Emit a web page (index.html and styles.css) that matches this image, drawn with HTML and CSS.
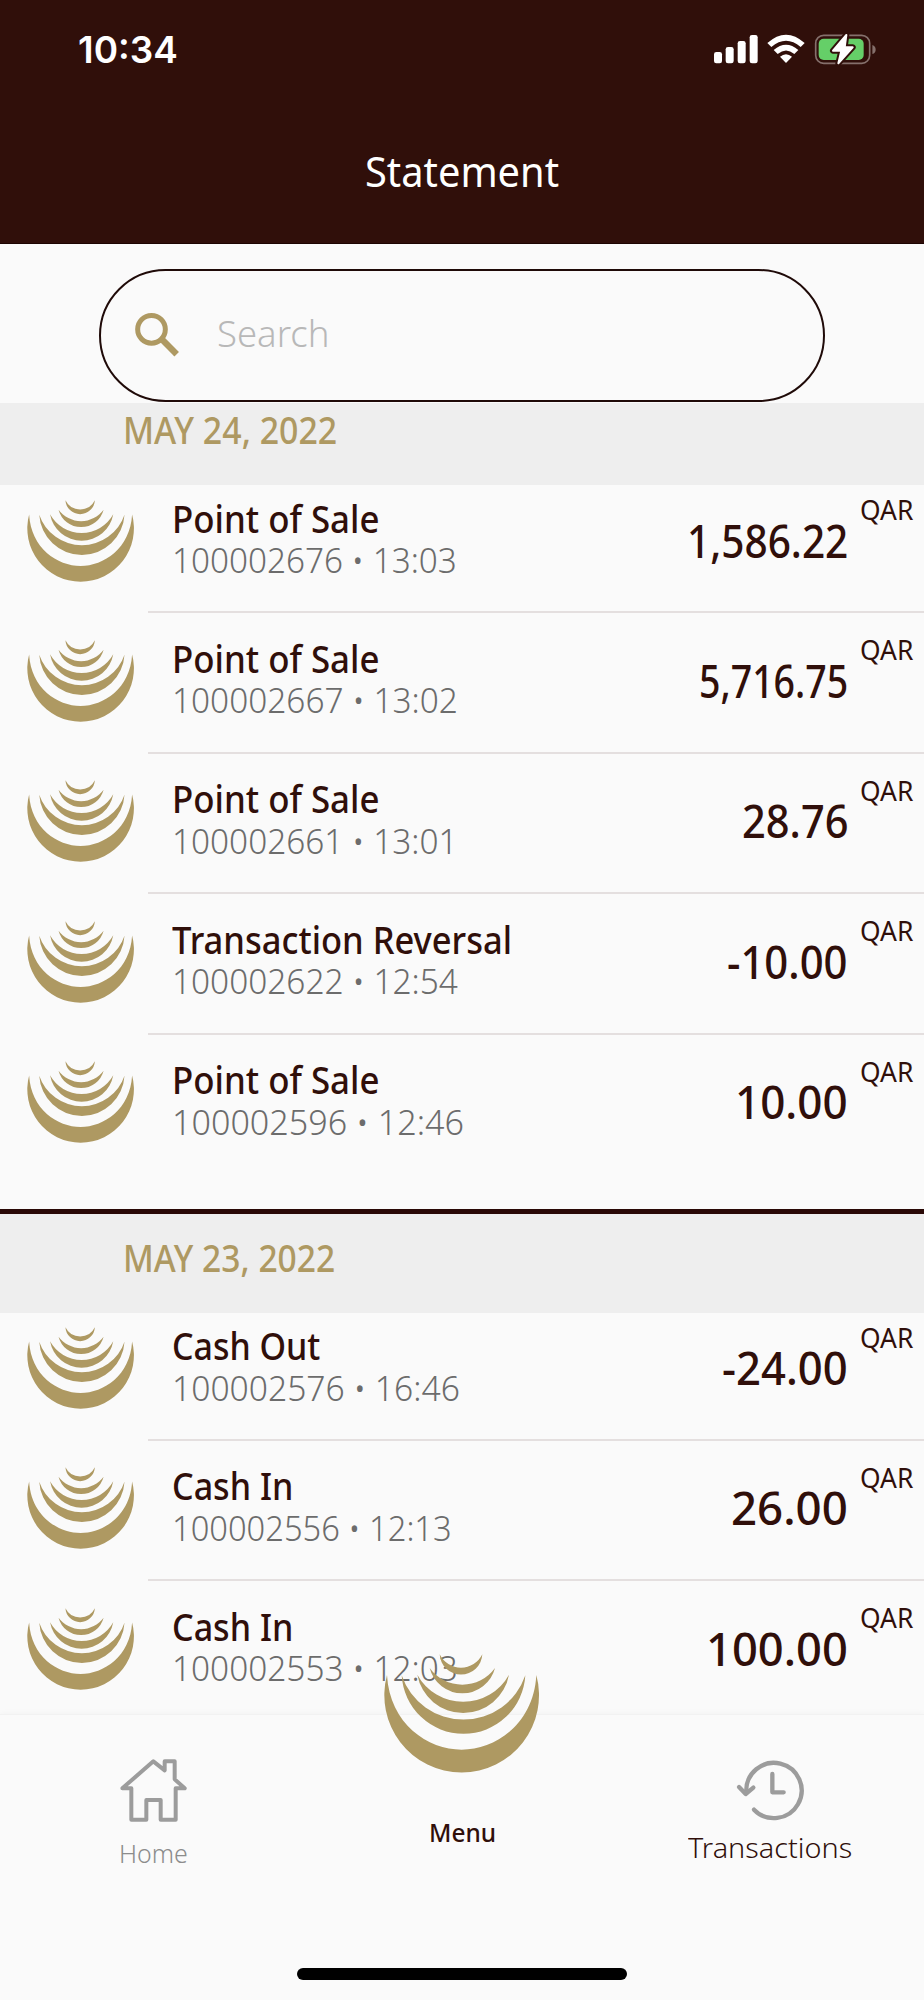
FILE: index.html
```html
<!DOCTYPE html>
<html lang="en">
<head>
<meta charset="utf-8">
<title>Statement</title>
<link rel="stylesheet" href="styles.css">
</head>
<body>
<svg class="defs" aria-hidden="true">
  <symbol id="crescents" viewBox="133 100 465 359">
    <path d="M300 101A64.1 64.1 0 0 0 428 101A71.2 71.2 0 0 1 300 101Z"/>
    <path d="M270 142A101.2 101.2 0 0 0 466 142A121 121 0 0 1 270 142Z"/>
    <path d="M233 162A139.7 139.7 0 0 0 508 162A157 157 0 0 1 233 162Z"/>
    <path d="M186 164A185.8 185.8 0 0 0 557 164A196 196 0 0 1 186 164Z"/>
    <path d="M142 163A232 232 0 1 0 590 163C582 310 467 387 366 387C265 387 150 310 142 163Z"/>
  </symbol>
</svg>
<div class="screen">
  <header class="header">
    <div class="status">
      <span class="clock" data-fit="98">10:34</span>
      <svg class="status-icons" viewBox="750 97 500 102">
        <g fill="#fff">
          <rect x="756" y="157" width="24" height="34" rx="7"/>
          <rect x="791" y="142" width="24" height="49" rx="7"/>
          <rect x="827" y="124" width="24" height="67" rx="7"/>
          <rect x="863" y="106" width="24" height="85" rx="7"/>
          <path d="M916 130Q972 80 1028 130L1016 142Q972 104 928 142Z"/>
          <path d="M935 151Q972 119 1009 151L997 163Q972 142 947 163Z"/>
          <path d="M954 171Q972 156 990 171L972 190Z"/>
        </g>
        <rect x="1061" y="107" width="162" height="84" rx="24" fill="none" stroke="#85706c" stroke-width="5"/>
        <path d="M1231 136Q1241 140 1241 150Q1241 160 1231 163Z" fill="#85706c"/>
        <rect x="1070" y="117" width="135" height="64" rx="15" fill="#65cf68"/>
        <path d="M1153 106L1113 153H1138L1129 191L1172 143H1148Z" fill="#fff" stroke="#300f0a" stroke-width="18" stroke-linejoin="round"/>
        <path d="M1153 106L1113 153H1138L1129 191L1172 143H1148Z" fill="#fff" stroke="#fff" stroke-width="6" stroke-linejoin="round"/>
      </svg>
    </div>
    <h1 class="title"><span data-fit="192">Statement</span></h1>
  </header>

  <div class="search">
    <div class="search-box">
      <svg class="search-icon" viewBox="0 0 132 132" fill="none" stroke="#ae9962">
        <circle cx="49.500" cy="49" r="41.500" stroke-width="15"/>
        <path d="M82 80L125 124" stroke-width="19"/>
      </svg>
      <span class="placeholder" data-fit="109">Search</span>
    </div>
  </div>

  <main id="list"></main>

  <nav class="tabs">
    <div class="tab tab-home">
      <svg viewBox="119 117 206 194" fill="none" stroke="#9c9c9c" stroke-width="12" stroke-linejoin="round">
        <path d="M156 302V208H129L222 127L256 154V127H286V181L316 208H289V302H244V243H201V302Z"/>
      </svg>
      <span data-fit="66">Home</span>
    </div>
    <div class="tab tab-menu">
      <svg class="menu-logo"><use href="#crescents"/></svg>
      <span data-fit="64">Menu</span>
    </div>
    <div class="tab tab-transactions">
      <svg viewBox="228 122 206 184" fill="none" stroke="#9c9c9c" stroke-width="13" stroke-linecap="round" stroke-linejoin="round">
        <path d="M259 218A83 83 0 1 1 282 271"/>
        <path d="M237 203L257 224L280 205"/>
        <path d="M337 164V219H371"/>
      </svg>
      <span data-fit="163">Transactions</span>
    </div>
    <div class="indicator"></div>
  </nav>
</div>
<script src="app.js"></script>
</body>
</html>
```
FILE: styles.css
```css
* { box-sizing: border-box; }
body { margin: 0; background: #fafafa; font-family: "Noto Sans", "Open Sans", sans-serif; color: #300f0a; }
.defs { display: none; }
.screen { width: 924px; height: 2000px; overflow: hidden; display: flex; flex-direction: column; background: #fafafa; }
span { display: inline-block; white-space: pre; transform-origin: 0 50%; }
svg { display: block; flex: none; overflow: visible; }

.header { height: 243.5px; flex: none; background: #300f0a; color: #fff; border-bottom: 1.5px solid #1d0502; }
.status { display: flex; justify-content: space-between; padding: 25px 45px 0 77.5px; height: 112px; }
.clock { font: 600 37.5px/50px Inter, sans-serif; }
.status-icons { width: 166.7px; height: 34px; margin: 7.3px 0 0; }
.title { margin: 29px 0 0; font-size: 42px; font-weight: 400; line-height: 60px; text-align: center; }

.search { flex: none; height: 159px; padding: 25px 99px 0; }
.search-box { height: 133.5px; border: 2px solid #1f0a08; border-radius: 67px; display: flex; align-items: flex-start; background: #fafafa; }
.search-icon { width: 44px; height: 44px; margin: 42.5px 0 0 34px; }
.placeholder { margin: 38px 0 0 38px; font-size: 36px; font-weight: 300; line-height: 50px; color: #b8b8b8; }

#list { flex: none; height: 1311.5px; overflow: hidden; }
.date { height: 82.5px; padding: 1.5px 0 0 122.5px; background: #eee; color: #ae9962; font-size: 38px; font-weight: 500; line-height: 50px; }
.section + .section .date { height: 103.5px; border-top: 5px solid #2a0906; padding-top: 18px; }
.row { display: flex; height: 140.5px; padding: 22.7px 0 0 26.5px; position: relative; }
.row:nth-child(2) { height: 128px; padding-top: 10.7px; }
.section:first-child .row:last-child { height: 174.5px; }
.row:not(:last-child)::after { content: ""; position: absolute; left: 148px; right: 0; bottom: 0; height: 2px; background: #e4dfdf; }
.row-logo { width: 107px; height: 82.5px; margin-top: 4px; fill: #ae9962; }
.info { flex: 1; padding-left: 38.5px; display: flex; flex-direction: column; align-items: flex-start; }
.name { font-size: 38px; font-weight: 500; line-height: 44px; }
.meta { margin: 0.5px 0 0 -0.5px; font-size: 35px; font-weight: 300; line-height: 40px; color: #6c6c6c; }
.amount { padding-top: 20px; font-size: 45px; font-weight: 500; line-height: 50px; }
.currency { width: 76px; padding-left: 11.5px; margin-top: -1.5px; font-size: 28px; line-height: 30px; }

.tabs { flex: 1; display: grid; grid-template-columns: 307px 1fr 308px; grid-template-rows: 246px 1fr; border-top: 1px solid #f2f2f2; position: relative; background: #fafafa; box-shadow: 0 -2px 5px rgba(0,0,0,.025); }
.tab { display: flex; flex-direction: column; align-items: center; }
.tab svg { margin-top: 43px; }
.tab-home svg { width: 68.7px; height: 64.7px; }
.tab-home span { margin-top: 10px; font-size: 25px; font-weight: 300; line-height: 40px; color: #8c8c8c; }
.tab-menu { padding: 96.500px 0 0 2px; }
.tab-menu span { font-size: 26px; font-weight: 500; line-height: 40px; }
.tab .menu-logo { position: absolute; top: -61.5px; left: 384px; width: 155px; height: 119.7px; margin: 0; fill: #ae9962; }
.tab-transactions svg { width: 68.7px; height: 61.3px; margin-top: 45px; }
.tab-transactions span { margin-top: 5.5px; font-size: 28px; font-weight: 300; line-height: 40px; }
.indicator { grid-column: 1 / -1; justify-self: center; width: 330px; height: 12px; margin-top: 6.5px; border-radius: 6px; background: #000; }
```
FILE: app.js
```js
// Each row: name, name width, reference, reference width, amount, amount width.
const sections = [
  { date: "MAY 24, 2022", width: 210, rows: [
    ["Point of Sale", 203, "100002676 • 13:03", 280, "1,586.22", 157],
    ["Point of Sale", 203, "100002667 • 13:02", 281, "5,716.75", 146],
    ["Point of Sale", 203, "100002661 • 13:01", 275, "28.76", 103],
    ["Transaction Reversal", 338, "100002622 • 12:54", 283, "-10.00", 118],
    ["Point of Sale", 203, "100002596 • 12:46", 288, "10.00", 108]
  ] },
  { date: "MAY 23, 2022", width: 208, rows: [
    ["Cash Out", 146, "100002576 • 16:46", 284, "-24.00", 123],
    ["Cash In", 117, "100002556 • 12:13", 275, "26.00", 113],
    ["Cash In", 117, "100002553 • 12:03", 281, "100.00", 137]
  ] }
];

const cell = (cls, text, width) => `<span class="${cls}" data-fit="${width}">${text}</span>`;

document.getElementById("list").innerHTML = sections.map(s => `
  <section class="section">
    <div class="date">${cell("day", s.date, s.width)}</div>
    ${s.rows.map(r => `<div class="row">
      <svg class="row-logo"><use href="#crescents"/></svg>
      <div class="info">${cell("name", r[0], r[1])}${cell("meta", r[2], r[3])}</div>
      ${cell("amount", r[4], r[5])}
      <div class="currency">${cell("code", "QAR", 52)}</div>
    </div>`).join("")}
  </section>`).join("");

// Condense each label horizontally so its drawn width equals data-fit.
const ctx = document.createElement("canvas").getContext("2d");
document.querySelectorAll("[data-fit]").forEach(el => {
  const cs = getComputedStyle(el);
  ctx.font = `${cs.fontWeight} ${cs.fontSize} ${cs.fontFamily}`;
  const m = ctx.measureText(el.textContent);
  const ink = m.actualBoundingBoxRight + m.actualBoundingBoxLeft;
  const scale = Number(el.dataset.fit) / ink;
  el.style.transform = `scaleX(${scale})`;
  el.style.marginRight = m.width * (scale - 1) + "px";
});
```
